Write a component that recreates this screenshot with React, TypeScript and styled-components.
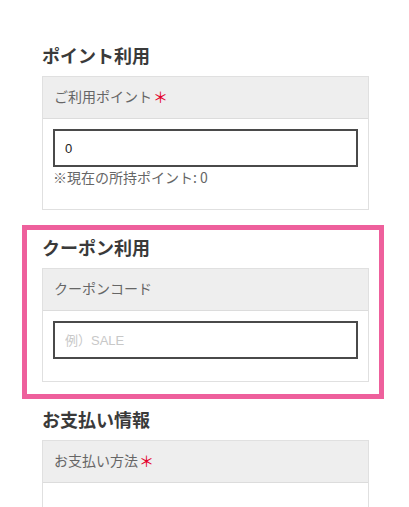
import React from "react";
import styled, { createGlobalStyle } from "styled-components";

const Global = createGlobalStyle`
  html, body { margin: 0; padding: 0; background: #fff; }
  body { font-family: "Noto Sans CJK JP", "Noto Sans", sans-serif; color: #333; }
  * { box-sizing: border-box; }
`;

const Page = styled.div`
  display: flex;
  flex-direction: column;
  align-items: flex-start;
  padding: 45px 0 40px 22px;
`;

const Section = styled.section<{ $mt?: number }>`
  display: flex;
  flex-direction: column;
  width: 327px;
  margin-left: 20px;
  margin-top: ${(p) => p.$mt ?? 0}px;
`;

const Highlight = styled.div`
  width: 362px;
  margin-top: 15px;
  border: 5px solid #ee609c;
  padding: 7px 10px 12px 15px;
  display: flex;
  flex-direction: column;
`;

const InnerSection = styled.section`
  display: flex;
  flex-direction: column;
  width: 327px;
`;

const Heading = styled.h2`
  margin: 0 0 11px;
  font-size: 18px;
  line-height: 20px;
  font-weight: 700;
  color: #3a3a3a;
`;

const Box = styled.div`
  border: 1px solid #e0e0e0;
  display: flex;
  flex-direction: column;
`;

const BoxHeader = styled.div`
  height: 42px;
  background: #eeeeee;
  border-bottom: 1px solid #dcdcdc;
  display: flex;
  align-items: center;
  padding: 0 0 3px 11px;
  font-size: 14px;
  color: #666;
`;

const Required = styled.span`
  color: #e4002b;
  font-size: 15px;
  margin-left: 1px;
`;

const BoxBody = styled.div<{ $h?: number }>`
  display: flex;
  flex-direction: column;
  padding: 10px 10px 22px;
  min-height: ${(p) => p.$h ?? 0}px;
`;

const Input = styled.input`
  height: 38px;
  width: 100%;
  border: 2px solid #4a4a4a;
  padding: 0 10px;
  font-family: "Liberation Sans", "Noto Sans CJK JP", sans-serif;
  font-size: 13px;
  color: #222;
  outline: none;
  background: #fff;
  &::placeholder { color: #c8c8c8; }
`;

const Note = styled.div`
  margin: 2px 0 2px;
  font-size: 14px;
  line-height: 16px;
  color: #666;
`;

export default function App() {
  return (
    <>
      <Global />
      <Page>
        <Section>
          <Heading>ポイント利用</Heading>
          <Box>
            <BoxHeader>
              ご利用ポイント<Required>＊</Required>
            </BoxHeader>
            <BoxBody>
              <Input defaultValue="0" />
              <Note>※現在の所持ポイント: 0</Note>
            </BoxBody>
          </Box>
        </Section>
        <Highlight>
          <InnerSection>
            <Heading>クーポン利用</Heading>
            <Box>
              <BoxHeader>クーポンコード</BoxHeader>
              <BoxBody>
                <Input placeholder="例）SALE" />
              </BoxBody>
            </Box>
          </InnerSection>
        </Highlight>
        <Section $mt={10}>
          <Heading>お支払い情報</Heading>
          <Box>
            <BoxHeader>
              お支払い方法<Required>＊</Required>
            </BoxHeader>
            <BoxBody $h={60} />
          </Box>
        </Section>
      </Page>
    </>
  );
}
